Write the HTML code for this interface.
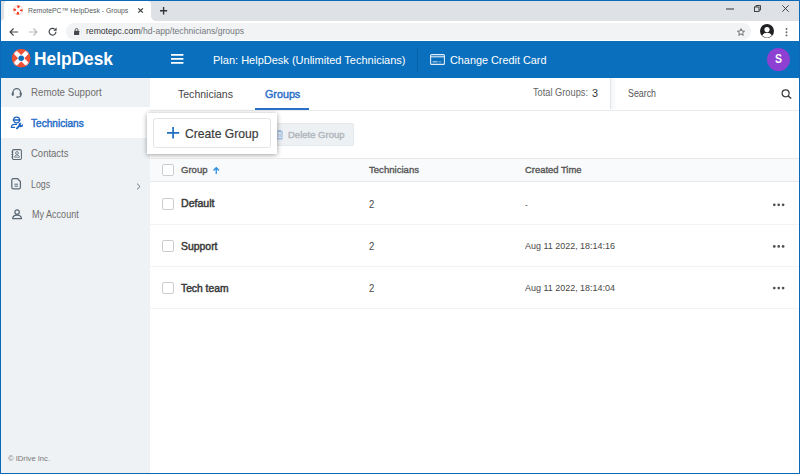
<!DOCTYPE html>
<html><head><meta charset="utf-8">
<title>RemotePC HelpDesk - Groups</title>
<style>
*{box-sizing:border-box;margin:0;padding:0}
html,body{width:800px;height:474px;overflow:hidden;background:#fff}
body{font-family:"Liberation Sans",sans-serif;position:relative;color:#333}
.abs{position:absolute}
svg{overflow:visible}
.t{position:absolute;white-space:nowrap;line-height:1;transform-origin:0 0;font-family:"Liberation Sans",sans-serif}
#frame{position:absolute;left:0;top:0;width:800px;height:474px;border:1px solid #0b69b8;z-index:50}
#tabstrip{left:0;top:0;width:800px;height:21px;background:#dee1e6}
#tab{left:4px;top:1px;width:147px;height:20px;background:#fff;border-radius:4px 4px 0 0}
#toolbar{left:0;top:21px;width:800px;height:20px;background:#fff}
#pill{left:66px;top:23px;width:685px;height:16.500px;border-radius:8.250px;background:#f1f3f4}
#hdr{left:0;top:41px;width:800px;height:37px;background:#0a6fbd}
#side{left:0;top:78px;width:150px;height:396px;background:#eef2f5}
.cb{position:absolute;width:12px;height:12px;border:1px solid #cbced1;border-radius:2px;background:#fff}
.dots{position:absolute;width:12px;height:3px}
.dots i{position:absolute;top:0;width:2.600px;height:2.600px;border-radius:50%;background:#555}
.rowline{position:absolute;left:150px;width:650px;height:1px;background:#f2f3f4}
</style></head><body>
<div class="abs" id="tabstrip"></div>
<div class="abs" id="tab"></div>
<div class="abs" id="toolbar"></div>
<div class="abs" id="pill"></div>
<div class="abs" style="left:151px;top:16px;width:5px;height:5px;background:radial-gradient(circle at 100% 0,#dee1e6 4.600px,#fff 5.200px)"></div>
<div class="abs" style="left:0px;top:17px;width:4px;height:4px;background:radial-gradient(circle at 0 0,#dee1e6 3.600px,#fff 4.200px)"></div>
<!-- favicon -->
<svg class="abs" style="left:12.800px;top:5.200px" width="10" height="10" viewBox="0 0 10 10"><circle cx="5" cy="5" r="4.600" fill="#fff" stroke="#f0b4a8" stroke-width="0.700"/><circle cx="5" cy="5" r="3.200" fill="none" stroke="#ee3a1c" stroke-width="2.500" stroke-dasharray="2.200 2.827" stroke-dashoffset="1.100"/></svg>
<svg class="abs" style="left:137.600px;top:7.900px" width="5.200" height="5" viewBox="0 0 5.200 5"><path d="M0.300 0.300L4.900 4.700M4.900 0.300L0.300 4.700" stroke="#33373a" stroke-width="1.150"/></svg>
<svg class="abs" style="left:160px;top:6.600px" width="7.200" height="7.400" viewBox="0 0 7.200 7.400"><path d="M3.600 0V7.400M0 3.700H7.200" stroke="#33373a" stroke-width="1.400"/></svg>
<!-- window controls -->
<svg class="abs" style="left:726px;top:8px" width="8" height="2" viewBox="0 0 8 2"><path d="M0 1H8" stroke="#333" stroke-width="1"/></svg>
<svg class="abs" style="left:754.300px;top:4.500px" width="7" height="7" viewBox="0 0 7 7"><rect x="0.500" y="2" width="4.500" height="4.500" fill="none" stroke="#333" stroke-width="0.900"/><path d="M2 2V0.500H6.500V5H5" fill="none" stroke="#333" stroke-width="0.900"/></svg>
<svg class="abs" style="left:782px;top:5.300px" width="7" height="7" viewBox="0 0 7 7"><path d="M0.300 0.300L6.700 6.700M6.700 0.300L0.300 6.700" stroke="#333" stroke-width="0.900"/></svg>
<!-- nav icons -->
<svg class="abs" style="left:9px;top:27.500px" width="9" height="8" viewBox="0 0 9 8"><path d="M9 4H1.200M4.600 0.500L1 4L4.600 7.500" fill="none" stroke="#44484c" stroke-width="1.150"/></svg>
<svg class="abs" style="left:28.500px;top:27.500px" width="9" height="8" viewBox="0 0 9 8"><path d="M0 4H7.800M4.400 0.500L8 4L4.400 7.500" fill="none" stroke="#babcbe" stroke-width="1.150"/></svg>
<svg class="abs" style="left:48px;top:27px" width="9" height="9" viewBox="0 0 9 9"><path d="M7.900 4.700A3.400 3.400 0 1 1 6.700 2.100" fill="none" stroke="#44484c" stroke-width="1.200"/><path d="M8.600 0.400V3.800H5.200Z" fill="#44484c"/></svg>
<svg class="abs" style="left:73.800px;top:27.600px" width="5.200" height="7" viewBox="0 0 5.200 7"><rect x="0" y="2.800" width="5.200" height="4.200" rx="0.500" fill="#44484c"/><path d="M1.200 2.800V1.900A1.400 1.400 0 0 1 4 1.900V2.800" fill="none" stroke="#44484c" stroke-width="0.850"/></svg>
<svg class="abs" style="left:737px;top:27.500px" width="8" height="8" viewBox="0 0 10 10"><path d="M5 0.800L6.200 3.800L9.400 4L7 6L7.800 9.200L5 7.400L2.200 9.200L3 6L0.600 4L3.800 3.800Z" fill="none" stroke="#5f6368" stroke-width="1.100"/></svg>
<svg class="abs" style="left:760px;top:24px" width="14" height="14" viewBox="0 0 14 14"><circle cx="7" cy="7" r="7" fill="#202124"/><circle cx="7" cy="5.600" r="2.600" fill="#fff"/><path d="M2.200 11.600C3.200 9.400 5 8.800 7 8.800S10.800 9.400 11.800 11.600A6.600 6.600 0 0 1 2.200 11.600Z" fill="#fff"/></svg>
<svg class="abs" style="left:785.300px;top:27.600px" width="3" height="8.400" viewBox="0 0 3 8.400"><circle cx="1.500" cy="1" r="0.950" fill="#5f6368"/><circle cx="1.500" cy="4.200" r="0.950" fill="#5f6368"/><circle cx="1.500" cy="7.400" r="0.950" fill="#5f6368"/></svg>

<!-- app header -->
<div class="abs" id="hdr"></div>
<svg class="abs" style="left:11.800px;top:49.200px" width="18.400" height="18.400" viewBox="0 0 18.400 18.400"><clipPath id="lg"><circle cx="9.200" cy="9.200" r="9.100"/></clipPath><circle cx="9.200" cy="9.200" r="9.100" fill="#ee5236"/><g clip-path="url(#lg)" stroke="#fff" stroke-width="4.400"><path d="M0 0L18.400 18.400M18.400 0L0 18.400"/></g><circle cx="9.200" cy="9.200" r="2.800" fill="#0a6fbd"/><circle cx="9.200" cy="9.200" r="8.800" fill="none" stroke="#ee5236" stroke-width="0.700"/></svg>
<svg class="abs" style="left:171px;top:54.400px" width="12.400" height="10" viewBox="0 0 12.400 10"><path d="M0 0.900H12.400M0 4.900H12.400M0 8.900H12.400" stroke="#fff" stroke-width="1.600"/></svg>
<div class="abs" style="left:417px;top:47.500px;width:1px;height:24px;background:#095fa8"></div>
<svg class="abs" style="left:430px;top:54px" width="15" height="11" viewBox="0 0 15 11" opacity="0.880"><rect x="0.600" y="0.600" width="13.800" height="9.800" rx="1" fill="none" stroke="#fff" stroke-width="1.100"/><path d="M0.600 2.800H14.400" stroke="#fff" stroke-width="1.100"/><path d="M2.600 7.800H7.500" stroke="#fff" stroke-width="1.100" opacity="0.800"/><path d="M8.500 7.800H11" stroke="#fff" stroke-width="1.100" opacity="0.500"/></svg>
<div class="abs" style="left:767px;top:47.500px;width:23px;height:23px;border-radius:50%;background:#8d40d1"></div>

<!-- sidebar -->
<div class="abs" id="side"></div>
<div class="abs" style="left:0;top:107px;width:150px;height:31px;background:#fff"></div>
<svg class="abs" style="left:11px;top:88px" width="11.500" height="10" viewBox="0 0 11.500 10" fill="none" stroke="#5b6975" stroke-width="1"><path d="M2 5.800V4.300A3.750 3.750 0 0 1 9.500 4.300V5.800" stroke-width="1.250"/><rect x="1" y="4.600" width="1.500" height="3" rx="0.700" fill="#5b6975" stroke-width="0.600"/><rect x="9" y="4.600" width="1.500" height="3" rx="0.700" fill="#5b6975" stroke-width="0.600"/><path d="M9.800 7.500C9.800 8.700 8.500 9.100 6.600 9.100" stroke-width="1.100"/><circle cx="6.200" cy="9.100" r="0.950" fill="#5b6975" stroke="none"/></svg>
<svg class="abs" style="left:6px;top:112px" width="24" height="22" viewBox="0 0 24 22" fill="none" stroke="#1f64c0" stroke-width="1.200" stroke-linecap="round"><ellipse cx="10.600" cy="8" rx="3" ry="2.800"/><path d="M7.200 8H14" stroke-width="1.300"/><path d="M5.400 15.300C5.400 13.200 6.800 12.400 8.600 12.400H10.600"/><path d="M5.400 15.400H8.600"/><path d="M10.900 16.300L13.600 13.600" stroke-width="1.900"/><circle cx="14.800" cy="13" r="2.300" fill="#1f64c0" stroke="none"/><path d="M15 12.800L17.200 10.600" stroke="#fff" stroke-width="1.500" stroke-linecap="butt"/></svg>
<svg class="abs" style="left:11px;top:148.500px" width="11" height="11" viewBox="0 0 11 11" fill="none" stroke="#5b6975" stroke-width="1.050"><rect x="1.500" y="0.600" width="8.900" height="9.800" rx="1.200"/><path d="M0.200 3H2.400M0.200 5.500H2.400M0.200 8H2.400" stroke-width="0.800"/><circle cx="6" cy="4" r="1.400" stroke-width="0.800"/><path d="M3.600 8.200C3.600 6.600 4.800 6.100 6 6.100S8.400 6.600 8.400 8.200Z" stroke-width="0.800"/></svg>
<svg class="abs" style="left:11px;top:178px" width="10.500" height="11.500" viewBox="0 0 10.500 11.500" fill="none" stroke="#5b6975" stroke-width="1.250"><path d="M0.800 2V9.600A1.200 1.200 0 0 0 2 10.800H8.200A1.200 1.200 0 0 0 9.400 9.600V3.600L6.600 0.700H2A1.200 1.200 0 0 0 0.800 2Z"/><path d="M3.400 6.200H7M3.400 8.200H7" stroke-width="1"/></svg>
<svg class="abs" style="left:12px;top:209.200px" width="10.200" height="10.500" viewBox="0 0 10 10" fill="none" stroke="#5b6975" stroke-width="1.200"><circle cx="5" cy="2.900" r="2.200"/><path d="M0.700 9.400C0.700 7 2.600 5.900 5 5.900S9.300 7 9.300 9.400Z"/></svg>
<svg class="abs" style="left:135.500px;top:183px" width="5" height="7" viewBox="0 0 5 7" fill="none" stroke="#6a7680" stroke-width="1"><path d="M1 0.600L4 3.500L1 6.400"/></svg>

<!-- main tabs -->
<div class="abs" style="left:150px;top:109.500px;width:650px;height:1px;background:#e9ebed"></div>
<div class="abs" style="left:255px;top:107.800px;width:54px;height:2.200px;background:#2a6fc9"></div>
<div class="abs" style="left:610px;top:78px;width:1px;height:31px;background:#e3e5e8"></div>
<div class="abs" style="left:611px;top:78px;width:6px;height:31px;background:linear-gradient(90deg,#f4f5f6,#fff)"></div>
<svg class="abs" style="left:781px;top:88.500px" width="11" height="10" viewBox="0 0 11 10"><circle cx="4.600" cy="4.300" r="3.500" fill="none" stroke="#3a3a3a" stroke-width="1.200"/><path d="M7.200 6.900L10.200 9.600" stroke="#3a3a3a" stroke-width="1.400"/></svg>

<!-- buttons -->
<div class="abs" style="left:270px;top:123px;width:83.500px;height:22.800px;background:#eef1f3;border:1px solid #e6e9eb;border-radius:2px"></div>
<svg class="abs" style="left:276.400px;top:129.800px" width="7" height="9.600" viewBox="0 0 7 9.600" fill="none" stroke="#9abbe2" stroke-width="1.050"><path d="M0.200 1.800H6.800M2.300 1.800V0.600H4.700V1.800"/><path d="M1 1.800V8.900H6V1.800"/><path d="M2.700 3.600V7.200M4.300 3.600V7.200" stroke-width="0.800"/></svg>
<div class="abs" style="left:147px;top:112.500px;width:130px;height:41.500px;background:#fff;box-shadow:0 1px 5px rgba(0,0,0,0.380)"></div>
<div class="abs" style="left:153px;top:118px;width:118px;height:29.500px;background:#fff;border:1px solid #e2e4e7;border-radius:2.500px"></div>
<svg class="abs" style="left:167.300px;top:127.400px" width="12.200" height="11.600" viewBox="0 0 12.200 11.600"><path d="M6.100 0V11.600M0 5.800H12.200" stroke="#1f6fc0" stroke-width="1.700"/></svg>

<!-- table -->
<div class="abs" style="left:150px;top:158px;width:650px;height:24px;background:#f9fafb;border-top:1px solid #e6e8ea;border-bottom:1px solid #e6e8ea"></div>
<div class="rowline" style="top:224px"></div>
<div class="rowline" style="top:266px"></div>
<div class="rowline" style="top:307.500px"></div>
<div class="cb" style="left:162px;top:164.300px"></div>
<div class="cb" style="left:162px;top:198.300px"></div>
<div class="cb" style="left:162px;top:240px"></div>
<div class="cb" style="left:162px;top:281.600px"></div>
<svg class="abs" style="left:212.500px;top:167px" width="6.500" height="7" viewBox="0 0 6.500 7"><path d="M3.250 7V0.800M0.500 3.500L3.250 0.700L6 3.500" fill="none" stroke="#2a8fe0" stroke-width="1.300"/></svg>
<svg class="abs" style="left:770px;top:201px" width="18" height="8" viewBox="0 0 18 8" fill="#505050"><circle cx="4.300" cy="3.80" r="1.350"/><circle cx="8.700" cy="3.80" r="1.350"/><circle cx="13.100" cy="3.80" r="1.350"/></svg>
<svg class="abs" style="left:770px;top:243px" width="18" height="8" viewBox="0 0 18 8" fill="#505050"><circle cx="4.300" cy="3.40" r="1.350"/><circle cx="8.700" cy="3.40" r="1.350"/><circle cx="13.100" cy="3.40" r="1.350"/></svg>
<svg class="abs" style="left:770px;top:284px" width="18" height="8" viewBox="0 0 18 8" fill="#505050"><circle cx="4.300" cy="4.10" r="1.350"/><circle cx="8.700" cy="4.10" r="1.350"/><circle cx="13.100" cy="4.10" r="1.350"/></svg>
<div class="t" id="tabtitle" style="left:27.7px;top:6.67px;font-size:7.6px;font-weight:normal;color:#54585c;transform:scaleX(0.9002);">RemotePC™ HelpDesk - Groups</div>
<div class="t" id="url" style="left:86px;top:27.38px;font-size:9.0px;font-weight:normal;color:#34373a;transform:scaleX(0.9569);">remotepc.com<span style="color:#74787d">/hd-app/technicians/groups</span></div>
<div class="t" id="logo" style="left:34.25px;top:49.59px;font-size:18.2px;font-weight:bold;color:#fff;transform:scaleX(0.9529);">HelpDesk</div>
<div class="t" id="plan" style="left:213px;top:55.32px;font-size:11.2px;font-weight:normal;color:#fff;transform:scaleX(0.9839);">Plan: HelpDesk (Unlimited Technicians)</div>
<div class="t" id="ccc" style="left:449.5px;top:55.32px;font-size:11.2px;font-weight:normal;color:#fff;transform:scaleX(0.9698);">Change Credit Card</div>
<div class="t" id="avS" style="left:775px;top:52.96px;font-size:12.8px;font-weight:bold;color:#fff;transform:scaleX(0.8190);">S</div>
<div class="t" id="sb1" style="left:31px;top:87.77px;font-size:10.2px;font-weight:normal;color:#6e6e6e;transform:scaleX(0.9537);">Remote Support</div>
<div class="t" id="sb2" style="left:31px;top:118.67px;font-size:10.2px;font-weight:normal;color:#2a6fc9;transform:scaleX(0.9909);-webkit-text-stroke:0.45px currentColor;">Technicians</div>
<div class="t" id="sb3" style="left:31px;top:149.47px;font-size:10.2px;font-weight:normal;color:#6e6e6e;transform:scaleX(0.9328);">Contacts</div>
<div class="t" id="sb4" style="left:31px;top:179.87px;font-size:10.2px;font-weight:normal;color:#6e6e6e;transform:scaleX(0.8690);">Logs</div>
<div class="t" id="sb5" style="left:31.6px;top:210.47px;font-size:10.2px;font-weight:normal;color:#6e6e6e;transform:scaleX(0.8866);">My Account</div>
<div class="t" id="copy" style="left:8px;top:454.74px;font-size:7.4px;font-weight:normal;color:#777;transform:scaleX(1.0303);">© IDrive Inc.</div>
<div class="t" id="tb1" style="left:178px;top:89.35px;font-size:11.4px;font-weight:normal;color:#444;transform:scaleX(0.9239);">Technicians</div>
<div class="t" id="tb2" style="left:264.5px;top:89.35px;font-size:11.4px;font-weight:normal;color:#2a6fc9;transform:scaleX(0.9435);-webkit-text-stroke:0.45px currentColor;">Groups</div>
<div class="t" id="tot" style="left:533px;top:88.37px;font-size:10.2px;font-weight:normal;color:#666;transform:scaleX(0.9077);">Total Groups:</div>
<div class="t" id="tot3" style="left:591.5px;top:88.53px;font-size:10.0px;font-weight:normal;color:#333;transform:scaleX(1.0787);">3</div>
<div class="t" id="search" style="left:627.5px;top:89.07px;font-size:10.2px;font-weight:normal;color:#555;transform:scaleX(0.8674);">Search</div>
<div class="t" id="del" style="left:287.5px;top:131.01px;font-size:9.2px;font-weight:normal;color:#b3b9bf;transform:scaleX(1.0337);-webkit-text-stroke:0.45px currentColor;">Delete Group</div>
<div class="t" id="create" style="left:185px;top:127.03px;font-size:13.2px;font-weight:normal;color:#3c3c3c;transform:scaleX(0.9198);-webkit-text-stroke:0.2px currentColor;">Create Group</div>
<div class="t" id="h1" style="left:181px;top:165.00px;font-size:9.8px;font-weight:normal;color:#555;transform:scaleX(0.9730);-webkit-text-stroke:0.35px currentColor;">Group</div>
<div class="t" id="h2" style="left:368.5px;top:165.00px;font-size:9.8px;font-weight:normal;color:#555;transform:scaleX(0.9765);-webkit-text-stroke:0.35px currentColor;">Technicians</div>
<div class="t" id="h3" style="left:525px;top:165.00px;font-size:9.8px;font-weight:normal;color:#555;transform:scaleX(0.9607);-webkit-text-stroke:0.35px currentColor;">Created Time</div>
<div class="t" id="r1" style="left:181px;top:199.45px;font-size:10.1px;font-weight:normal;color:#3a3a3a;transform:scaleX(1.0474);-webkit-text-stroke:0.45px currentColor;">Default</div>
<div class="t" id="r2" style="left:181px;top:242.45px;font-size:10.1px;font-weight:normal;color:#3a3a3a;transform:scaleX(1.0323);-webkit-text-stroke:0.45px currentColor;">Support</div>
<div class="t" id="r3" style="left:181px;top:283.55px;font-size:10.1px;font-weight:normal;color:#3a3a3a;transform:scaleX(1.0198);-webkit-text-stroke:0.45px currentColor;">Tech team</div>
<div class="t" id="n1" style="left:368.5px;top:199.73px;font-size:10.0px;font-weight:normal;color:#484848;transform:scaleX(0.9528);">2</div>
<div class="t" id="n2" style="left:368.5px;top:241.53px;font-size:10.0px;font-weight:normal;color:#484848;transform:scaleX(0.9528);">2</div>
<div class="t" id="n3" style="left:368.5px;top:283.54px;font-size:10.0px;font-weight:normal;color:#484848;transform:scaleX(0.9528);">2</div>
<div class="t" id="d1" style="left:525px;top:200.46px;font-size:9.5px;font-weight:normal;color:#484848;transform:scaleX(0.8512);">-</div>
<div class="t" id="d2" style="left:525px;top:241.26px;font-size:9.5px;font-weight:normal;color:#484848;transform:scaleX(0.9430);">Aug 11 2022, 18:14:16</div>
<div class="t" id="d3" style="left:525px;top:282.96px;font-size:9.5px;font-weight:normal;color:#484848;transform:scaleX(0.9430);">Aug 11 2022, 18:14:04</div>
<div id="frame"></div>
</body></html>
